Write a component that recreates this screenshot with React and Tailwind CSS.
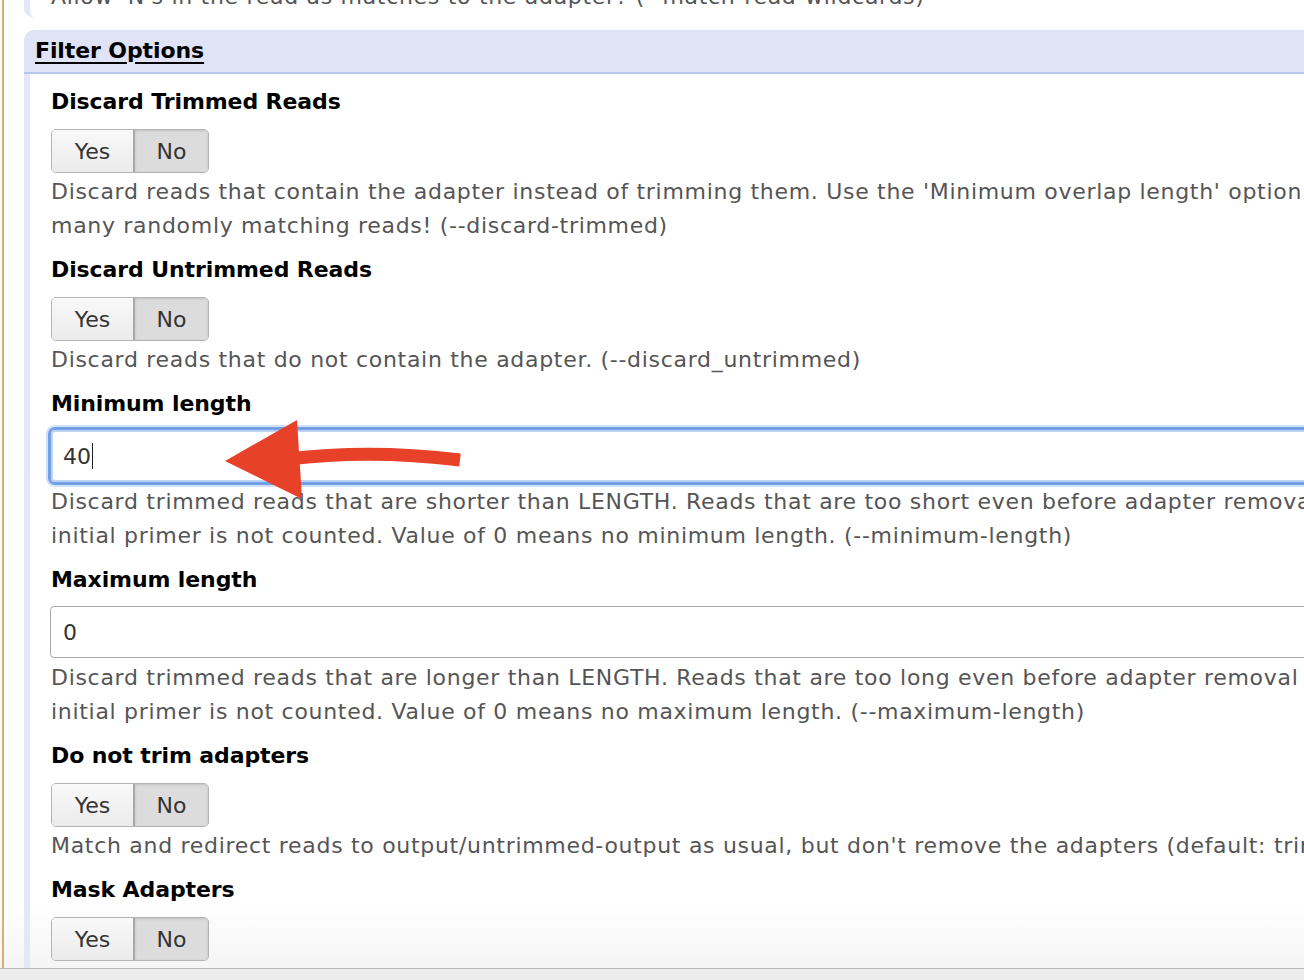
import React from "react";

function Toggle() {
  return (
    <div className="flex h-[44px] w-[158px] overflow-hidden rounded-[5px] border border-[#b3b3b3] text-[22px] text-[#333]">
      <div className="flex w-[81px] items-center justify-center bg-linear-to-b from-[#f9f9f9] to-[#ebebeb]">Yes</div>
      <div className="flex flex-1 items-center justify-center border-l-2 border-[#a8a8a8] bg-[#dcdcdc] shadow-[inset_0_1px_3px_rgba(0,0,0,0.12)]">No</div>
    </div>
  );
}

function Label({ children, mb = "mb-[11px]" }) {
  return <div className={"h-[34px] whitespace-nowrap pt-px text-[22px] font-bold leading-[34px] tracking-[-0.1px] text-black " + mb}>{children}</div>;
}

function Desc({ lines }) {
  return (
    <div className="whitespace-nowrap pt-px text-[22px] leading-[34px] tracking-[0.7px] text-[#555]">
      {lines.map((l, i) => (
        <div key={i}>{l}</div>
      ))}
    </div>
  );
}

export default function App() {
  return (
    <div className="relative h-[980px] w-[1304px] overflow-hidden bg-linear-to-b from-white from-[92%] to-[#f3f3f3] font-['DejaVu_Sans',sans-serif]">
      <div className="flex h-full">
        <div className="ml-[2px] w-[2px] shrink-0 bg-[#d6b06e]" />
        <div className="ml-[20px] flex w-[1400px] shrink-0 flex-col">
          {/* previous section tail */}
          <div className="-mt-[20px] rounded-bl-[10px] border-l-[6px] border-[#e3e7f7] pb-[4px] pl-[21px]">
            <div className="whitespace-nowrap text-[22px] leading-[34px] tracking-[0.7px] text-[#555]">
              Allow 'N's in the read as matches to the adapter? (--match-read-wildcards)
            </div>
          </div>

          {/* Filter Options section */}
          <div className="mt-[12px] flex flex-1 flex-col">
            <div className="h-[44px] rounded-tl-[10px] border-b-2 border-[#b7c4ec] bg-[#dfe3f5] pl-[11px]">
              <span className="text-[22px] font-bold leading-[42px] tracking-[-0.1px] text-black underline decoration-2 underline-offset-[4px]">Filter Options</span>
            </div>
            <div className="flex-1 border-l-[6px] border-[#e3e7f7] pl-[21px] pt-[10px]">
              <div className="mb-[9px]">
                <Label>Discard Trimmed Reads</Label>
                <div className="mb-px"><Toggle /></div>
                <Desc
                  lines={[
                    "Discard reads that contain the adapter instead of trimming them. Use the 'Minimum overlap length' option in order to avoid throwing away too",
                    "many randomly matching reads! (--discard-trimmed)",
                  ]}
                />
              </div>

              <div className="mb-[9px]">
                <Label>Discard Untrimmed Reads</Label>
                <div className="mb-px"><Toggle /></div>
                <Desc lines={["Discard reads that do not contain the adapter. (--discard_untrimmed)"]} />
              </div>

              <div className="mb-[9px]">
                <Label mb="mb-[10px]">Minimum length</Label>
                <div className="mb-[2px] flex h-[52px] items-center rounded-[4px] border-2 border-[#bcd3f5] pl-[10px] shadow-[0_0_0_3px_#73a0e4,0_0_0_5px_#cfe0f8] text-[22px] text-[#333]">
                  <span>40</span>
                  <span className="ml-px h-[26px] w-px bg-[#222]" />
                </div>
                <Desc
                  lines={[
                    "Discard trimmed reads that are shorter than LENGTH. Reads that are too short even before adapter removal are also discarded. In colorspace, an",
                    "initial primer is not counted. Value of 0 means no minimum length. (--minimum-length)",
                  ]}
                />
              </div>

              <div className="mb-[9px]">
                <Label mb="mb-[10px]">Maximum length</Label>
                <div className="-ml-px mb-[2px] flex h-[52px] items-center rounded-[4px] border border-[#aaaaaa] bg-white pl-[12px] text-[22px] text-[#333]">
                  0
                </div>
                <Desc
                  lines={[
                    "Discard trimmed reads that are longer than LENGTH. Reads that are too long even before adapter removal are also discarded. In colorspace, an",
                    "initial primer is not counted. Value of 0 means no maximum length. (--maximum-length)",
                  ]}
                />
              </div>

              <div className="mb-[9px]">
                <Label>Do not trim adapters</Label>
                <div className="mb-px"><Toggle /></div>
                <Desc lines={["Match and redirect reads to output/untrimmed-output as usual, but don't remove the adapters (default: trim the adapters)"]} />
              </div>

              <div className="mb-[9px]">
                <Label>Mask Adapters</Label>
                <div className="mb-px"><Toggle /></div>
                <Desc lines={["Mask adapters with 'N' characters instead of trimming them. (default: trim the adapters)"]} />
              </div>
            </div>
          </div>
        </div>
      </div>

      {/* red annotation arrow */}
      <svg className="pointer-events-none absolute left-0 top-0" width="1304" height="980" viewBox="0 0 1304 980">
        <path d="M288 459 Q 370 449 460 460" fill="none" stroke="#e8412a" strokeWidth="13" />
        <polygon points="225,461 297,420 302,499" fill="#e8412a" />
      </svg>

      {/* bottom bar */}
      <div className="absolute bottom-0 left-0 h-[12px] w-full border-t border-[#b8b8b8] bg-[#ececec]" />
    </div>
  );
}
